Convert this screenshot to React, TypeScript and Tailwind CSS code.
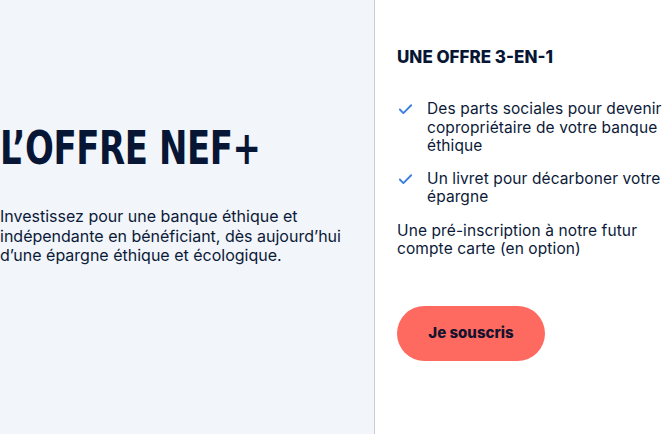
import { Check } from "lucide-react";

const FEATURES = [
  "Des parts sociales pour devenir copropriétaire de votre banque éthique",
  "Un livret pour décarboner votre épargne",
];

export default function App() {
  return (
    <div className="flex h-[434px] w-[672px] overflow-hidden bg-white font-['Inter',sans-serif] text-[#0b1a38]">
      <section className="flex w-[375px] shrink-0 flex-col border-r border-[#c9ced6] bg-[#f2f5fa] pt-[124px]">
        <h1 className="origin-left scale-x-[0.82] font-['DejaVu_Sans_Condensed','Liberation_Sans_Narrow',sans-serif] text-[46px] leading-[48px] font-bold tracking-[-0.5px] whitespace-nowrap text-[#071634]">
          L’OFFRE NEF+
        </h1>
        <p className="mt-[35px] text-[16px] leading-[19.5px] whitespace-nowrap text-[#0b1a38]">
          Investissez pour une banque éthique et
          <br />
          indépendante en bénéficiant, dès aujourd’hui
          <br />
          d’une épargne éthique et écologique.
        </p>
      </section>

      <section className="flex flex-1 flex-col pl-[22px] pt-[45px]">
        <h2 className="text-[17px] leading-[24px] font-extrabold text-[#071634]">UNE OFFRE 3-EN-1</h2>
        <ul className="mt-[31px] flex flex-col gap-[14px]">
          {FEATURES.map((f) => (
            <li key={f} className="flex gap-[13px]">
              <Check className="mt-[1px] h-[17px] w-[17px] shrink-0 text-[#3a7ee0]" strokeWidth={2.6} />
              <span className="text-[15.5px] leading-[18.5px] tracking-[0.1px]">{f}</span>
            </li>
          ))}
        </ul>
        <p className="mt-[15px] text-[15.5px] leading-[18.5px] tracking-[0.1px]">
          Une pré-inscription à notre futur
          <br />
          compte carte (en option)
        </p>
        <button className="mt-[47px] h-[55px] w-[148px] rounded-full bg-[#ff6a60] text-[15px] font-extrabold text-[#14122e]">
          Je souscris
        </button>
      </section>
    </div>
  );
}
